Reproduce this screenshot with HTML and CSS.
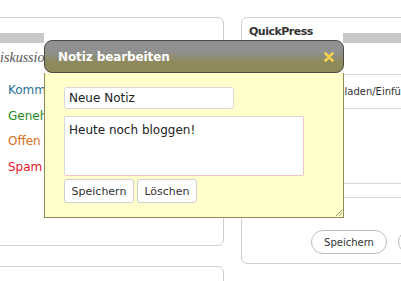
FILE: index.html
```html
<!DOCTYPE html>
<html lang="de">
<head>
  <meta charset="UTF-8" />
  <meta name="viewport" content="width=device-width, initial-scale=1.0"/>
  <title>Notiz bearbeiten</title>
  <link rel="stylesheet" href="styles.css">
</head>
<body>

  <div class="dash">
    <div class="col col-left">
      <div class="widget now">
        <div class="widget-head"><span class="band band-left"></span></div>
        <h4 class="sub">Diskussion</h4>
        <ul class="counts">
          <li class="c-all">Kommentare</li>
          <li class="c-ok">Genehmigt</li>
          <li class="c-open">Offen</li>
          <li class="c-spam">Spam</li>
        </ul>
      </div>
      <div class="widget next"></div>
    </div>

    <div class="col col-right">
      <div class="widget quick">
        <h3 class="widget-title">QuickPress</h3>
        <span class="band band-right"></span>
        <div class="qp-media">Hochladen/Einfügen</div>
        <div class="qp-editor"></div>
        <div class="qp-tags"></div>
        <div class="qp-actions">
          <button class="pill pill-save">Speichern</button>
          <button class="pill pill-next"></button>
        </div>
      </div>
    </div>
  </div>

  <div class="note">
    <div class="note-head">
      <span class="note-title">Notiz bearbeiten</span>
      <svg class="note-close" width="10" height="10" viewBox="0 0 10 10">
        <path d="M1.5 1.5 L8.5 8.5 M8.5 1.5 L1.5 8.5" stroke="#f3d34a" stroke-width="2.6" stroke-linecap="round"/>
      </svg>
    </div>
    <div class="note-body">
      <input class="note-name" type="text" value="Neue Notiz" />
      <textarea class="note-text">Heute noch bloggen!</textarea>
      <div class="note-buttons">
        <button class="nbtn nbtn-save">Speichern</button>
        <button class="nbtn nbtn-del">Löschen</button>
      </div>
      <svg class="grip" width="9" height="9" viewBox="0 0 9 9">
        <path d="M8 2 L2 8 M8 5 L5 8" stroke="#a39d62" stroke-width="1"/>
      </svg>
    </div>
  </div>

</body>
</html>
```

FILE: styles.css
```css
body {
  margin: 0;
  background: #fff;
  font-family: "DejaVu Sans", Verdana, sans-serif;
  color: #333;
  width: 401px;
  height: 281px;
  overflow: hidden;
  position: relative;
}

.dash {
  display: flex;
  padding-top: 17px;
}

.col-left {
  width: 240px;
  margin-left: -16px;
  flex: none;
}

.col-right {
  width: 200px;
  margin-left: 17px;
  flex: none;
}

.widget {
  box-sizing: border-box;
  border: 1px solid #cfcfcf;
  border-radius: 6px;
}

.now {
  height: 229px;
}

.next {
  margin-top: 20px;
  height: 60px;
}

.widget-head {
  height: 10px;
  padding-top: 15px;
}

.band {
  display: block;
  height: 10px;
  background: #c8c8c8;
}

.band-left {
  width: 59px;
}

.sub {
  margin: 7px 0 0;
  padding-left: 5px;
  font-family: "Liberation Serif", "Times New Roman", serif;
  font-style: italic;
  font-weight: normal;
  font-size: 14px;
  line-height: 16px;
  color: #555;
}

.counts {
  list-style: none;
  margin: 12px 0 0;
  padding: 0 0 0 23px;
  font-size: 12px;
}

.counts li {
  height: 25.5px;
  line-height: 25.5px;
}

.c-all { color: #2a6f98; }
.c-ok { color: #1e8a1e; }
.c-open { color: #de6c1a; }
.c-spam { color: #e3142a; }

.quick {
  width: 200px;
  height: 247px;
}

.widget-title {
  margin: 0;
  height: 8px;
  padding: 7px 0 0 7px;
  font-size: 11px;
  line-height: 14px;
  letter-spacing: -0.5px;
  font-weight: bold;
  color: #333;
}

.band-right {
  margin-left: 101px;
}

.qp-media {
  margin-top: 31px;
  height: 33px;
  line-height: 33px;
  border-top: 1px solid #d6d6d6;
  border-bottom: 1px solid #d6d6d6;
  padding-left: 77px;
  font-size: 10px;
  color: #333;
  white-space: nowrap;
}

.qp-editor {
  height: 74px;
  border-bottom: 1px solid #d6d6d6;
}

.qp-tags {
  margin-top: 13px;
  height: 20px;
  border-top: 1px solid #d6d6d6;
}

.qp-actions {
  display: flex;
  gap: 11px;
  margin-top: 12px;
  padding-left: 69px;
}

.pill {
  flex: none;
  box-sizing: border-box;
  height: 24px;
  padding: 0;
  border: 1px solid #bdbdbd;
  border-radius: 12px;
  background: #fff;
  font-family: "DejaVu Sans", Verdana, sans-serif;
  font-size: 10px;
  color: #333;
}

.pill-save { width: 76px; }
.pill-next { width: 80px; }

/* sticky note dialog */
.note {
  position: absolute;
  left: 44px;
  top: 40px;
  width: 300px;
  z-index: 10;
}

.note-head {
  box-sizing: border-box;
  height: 33px;
  display: flex;
  align-items: center;
  justify-content: space-between;
  padding: 0 9px 0 13px;
  border: 1px solid #4a4a40;
  border-radius: 8px;
  background: linear-gradient(#919191 0%, #909090 35%, #8e8a5b 70%, #8e8a5b 100%);
}

.note-title {
  color: #fff;
  font-weight: bold;
  font-size: 12px;
  letter-spacing: -0.1px;
}

.note-close {
  display: block;
}

.note-body {
  position: relative;
  box-sizing: border-box;
  height: 145px;
  padding: 14px 0 0 19px;
  background: #ffffcc;
  border: 1px solid #8f8b5a;
  border-top: none;
}

.note-name {
  display: block;
  box-sizing: border-box;
  width: 170px;
  height: 22px;
  margin: 0;
  padding: 0 4px;
  border: 1px solid #d8d8d8;
  border-radius: 3px;
  background: #fff;
  font-family: "DejaVu Sans", Verdana, sans-serif;
  font-size: 12px;
  color: #222;
  outline: none;
}

.note-text {
  display: block;
  box-sizing: border-box;
  width: 240px;
  height: 60px;
  margin: 7px 0 0;
  padding: 6px 4px;
  border: 1px solid #d8d8d8;
  border-right-color: #f0c6c6;
  border-bottom-color: #f0c6c6;
  border-radius: 2px;
  background: #fff;
  resize: none;
  font-family: "DejaVu Sans", Verdana, sans-serif;
  font-size: 12px;
  line-height: 15px;
  color: #222;
  outline: none;
}

.note-buttons {
  display: flex;
  gap: 3px;
  margin-top: 3px;
}

.nbtn {
  box-sizing: border-box;
  height: 24px;
  padding: 0;
  border: 1px solid #cfcfcf;
  border-radius: 3px;
  background: #fff;
  font-family: "DejaVu Sans", Verdana, sans-serif;
  font-size: 11px;
  color: #333;
}

.nbtn-save { width: 70px; }
.nbtn-del { width: 60px; }

.grip {
  position: absolute;
  right: 0;
  bottom: 0;
}
```
